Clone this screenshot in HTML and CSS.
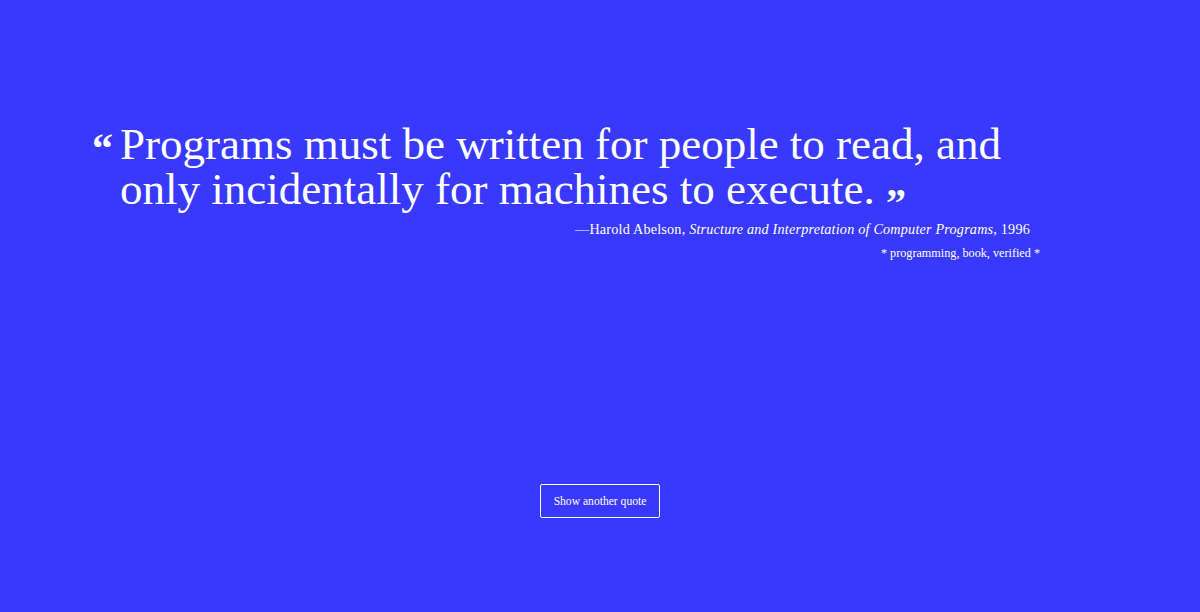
FILE: index.html
```html
<!DOCTYPE html>
<html>
<head>
<meta charset="utf-8">
<link rel="stylesheet" href="styles.css">
</head>
<body>
<main class="page">
  <section class="quote-block">
    <blockquote class="quote">
      <span class="mark open">“</span>
      <p class="quote-text">Programs must be written for people to read, and only incidentally for machines to execute. <span class="mark close">”</span></p>
    </blockquote>
    <p class="attribution">—Harold Abelson, <cite>Structure and Interpretation of Computer Programs</cite>, 1996</p>
    <p class="tags">* programming, book, verified *</p>
  </section>
  <div class="actions">
    <button class="btn">Show another quote</button>
  </div>
</main>
</body>
</html>
```
FILE: styles.css
```css
html, body {
  margin: 0;
  padding: 0;
  background: #3939fe;
  color: #ffffff;
  font-family: "Liberation Serif", "Times New Roman", serif;
}
.page {
  width: 1200px;
  height: 612px;
  display: flex;
  flex-direction: column;
}
.quote-block {
  width: 948px;
  margin: 122px 0 0 92px;
}
.quote {
  margin: 0;
  display: flex;
  align-items: flex-start;
}
.mark {
  font-weight: bold;
  line-height: 1;
}
.mark.open {
  font-size: 42px;
  width: 28px;
  flex: none;
  margin-top: 5px;
}
.mark.close {
  font-size: 40px;
  vertical-align: -12px;
  line-height: 0;
}
.quote-text {
  margin: 0;
  font-size: 45px;
  line-height: 45px;
  width: 900px;
}
.attribution {
  margin: 9px 10px 0 0;
  text-align: right;
  font-size: 14.2px;
  letter-spacing: 0.2px;
}
.attribution cite {
  font-style: italic;
}
.tags {
  margin: 8px 0 0 0;
  text-align: right;
  font-size: 12.2px;
}
.actions {
  display: flex;
  justify-content: center;
  margin-top: 223px;
}
.btn {
  width: 120px;
  height: 34px;
  background: transparent;
  border: 1.5px solid #ffffff;
  border-radius: 2px;
  color: #ffffff;
  font-family: "Liberation Serif", "Times New Roman", serif;
  font-size: 11.6px;
  padding: 0;
  cursor: pointer;
}
```
